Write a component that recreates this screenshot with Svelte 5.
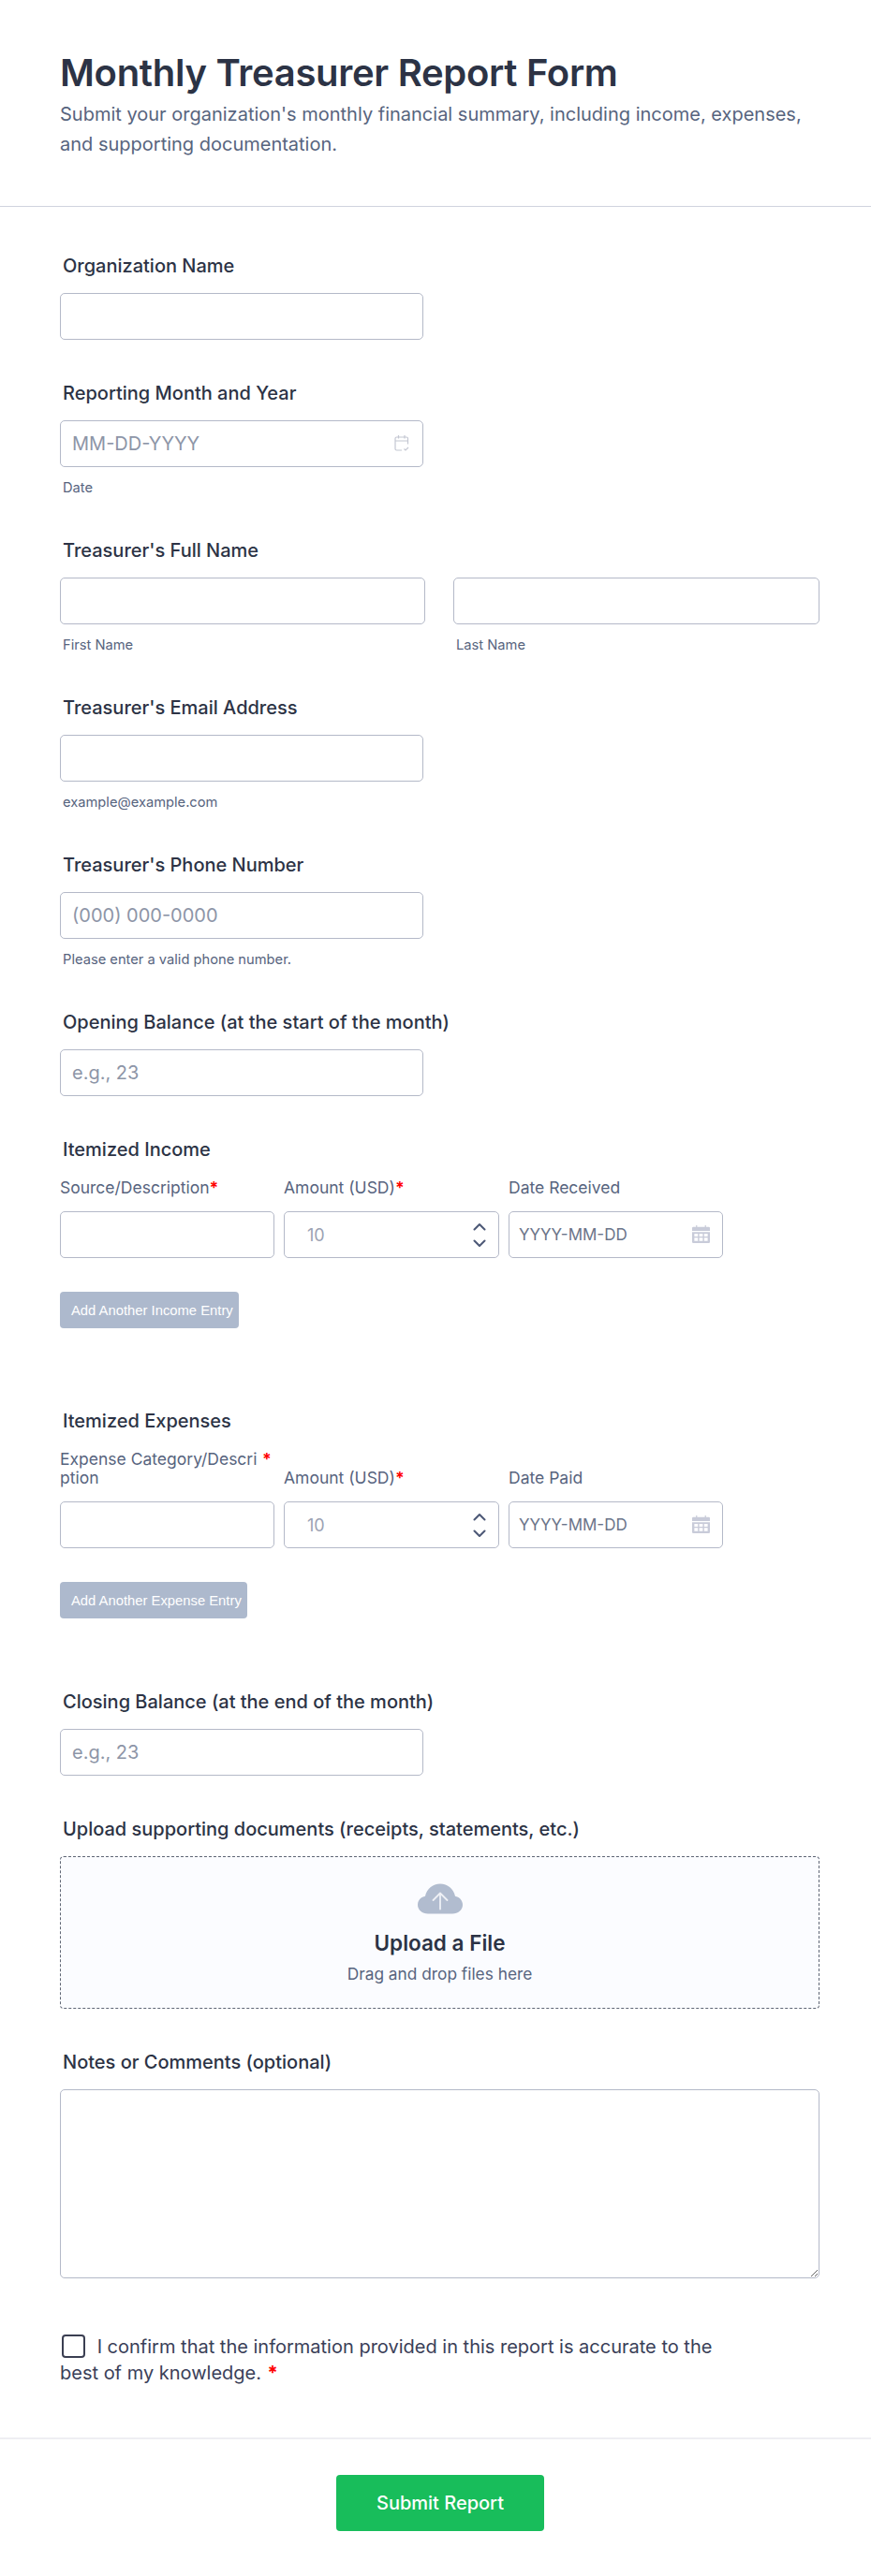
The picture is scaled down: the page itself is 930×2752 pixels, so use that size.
<script>
  const rows = [
    {
      title: "Itemized Income",
      first: "Source/Description",
      date: "Date Received",
      add: "Add Another Income Entry",
      long: false,
    },
    {
      title: "Itemized Expenses",
      first: "Expense Category/Description",
      date: "Date Paid",
      add: "Add Another Expense Entry",
      long: true,
    },
  ];
</script>

{#snippet calendar()}
  <svg class="cal" viewBox="2 2 16 16" width="19" height="19" aria-hidden="true">
    <path d="M2 4.500a1 1 0 0 1 1-1h2.500V2h1v1.500h7V2h1v1.500H17a1 1 0 0 1 1 1V7H2z" fill="#c8cbd9" />
    <path fill-rule="evenodd" d="M2 8h16v9a1 1 0 0 1-1 1H3a1 1 0 0 1-1-1zm2 1.500v2.500h3.200V9.500zm4.400 0v2.500h3.200V9.500zm4.400 0v2.500H16V9.500zM4 13.200v3h3.200v-3zm4.400 0v3h3.200v-3zm4.400 0v3H16v-3z" fill="#c8cbd9" />
  </svg>
{/snippet}

<main class="page">
  <header class="head">
    <h1>Monthly Treasurer Report Form</h1>
    <p>Submit your organization's monthly financial summary, including income, expenses, and supporting documentation.</p>
  </header>

  <form class="form">
    <div class="field">
      <label class="label" for="org">Organization Name</label>
      <input id="org" class="input half" type="text" />
    </div>

    <div class="field">
      <label class="label" for="month">Reporting Month and Year</label>
      <div class="with-icon half">
        <input id="month" class="input" type="text" placeholder="MM-DD-YYYY" />
        <svg class="month-icon" viewBox="1 1 16 18" width="16" height="19" fill="none" stroke="#c4c7d2" stroke-width="1.200" aria-hidden="true">
          <path d="M9 17.500H3.500a1.500 1.500 0 0 1-1.500-1.500V5a1.500 1.500 0 0 1 1.500-1.500h10.500A1.500 1.500 0 0 1 15.500 5v6" />
          <path d="M2 7.500h13.500M5.500 1.500v3.500M12 1.500v3.500" />
          <path d="M11.500 16l1.500 1.500 3-3" />
        </svg>
      </div>
      <small class="sub">Date</small>
    </div>

    <div class="field">
      <span class="label">Treasurer's Full Name</span>
      <div class="name-row">
        <div>
          <input class="input" type="text" aria-label="First Name" />
          <small class="sub">First Name</small>
        </div>
        <div>
          <input class="input" type="text" aria-label="Last Name" />
          <small class="sub">Last Name</small>
        </div>
      </div>
    </div>

    <div class="field">
      <label class="label" for="email">Treasurer's Email Address</label>
      <input id="email" class="input half" type="text" />
      <small class="sub">example@example.com</small>
    </div>

    <div class="field">
      <label class="label" for="phone">Treasurer's Phone Number</label>
      <input id="phone" class="input half" type="text" placeholder="(000) 000-0000" />
      <small class="sub">Please enter a valid phone number.</small>
    </div>

    <div class="field">
      <label class="label" for="opening">Opening Balance (at the start of the month)</label>
      <input id="opening" class="input half" type="text" placeholder="e.g., 23" />
    </div>

    {#each rows as row}
      <section class="table-field">
        <span class="label table-title">{row.title}</span>
        <div class="table-grid">
          <div class="col">
            <span class="col-label first" class:long={row.long}>{row.first}<b>*</b></span>
            <input class="input" type="text" aria-label={row.first} />
          </div>
          <div class="col">
            <span class="col-label">Amount (USD)<b>*</b></span>
            <div class="with-icon">
              <input class="input amount" type="text" placeholder="10" aria-label="Amount (USD)" />
              <svg class="spin" viewBox="0 0 14 27" width="14" height="27" fill="none" stroke="#4c5876" stroke-width="2" stroke-linecap="round" stroke-linejoin="round" aria-hidden="true">
                <path d="M1.500 7.500L7 2l5.500 5.500M1.500 19.500L7 25l5.500-5.500" />
              </svg>
            </div>
          </div>
          <div class="col">
            <span class="col-label">{row.date}</span>
            <div class="with-icon">
              <input class="input date" type="text" placeholder="YYYY-MM-DD" aria-label={row.date} />
              {@render calendar()}
            </div>
          </div>
        </div>
        <button type="button" class="add">{row.add}</button>
      </section>
    {/each}

    <div class="field">
      <label class="label" for="closing">Closing Balance (at the end of the month)</label>
      <input id="closing" class="input half" type="text" placeholder="e.g., 23" />
    </div>

    <div class="field">
      <span class="label">Upload supporting documents (receipts, statements, etc.)</span>
      <div class="upload">
        <svg viewBox="0 0 48 32" width="48" height="33" aria-hidden="true">
          <path d="M11 32C5 32 0 28 0 22.500 0 17.500 3.500 14 8 13.200 9.500 5.500 16 0 24 0s14.500 5.500 16 13.200c4.500.8 8 4.300 8 9.300C48 28 43 32 37 32z" fill="#b1bccf" />
          <path d="M24 27V10M16.500 17.500L24 10l7.500 7.500" fill="none" stroke="#eef0f5" stroke-width="1.800" stroke-linecap="round" stroke-linejoin="round" />
        </svg>
        <strong>Upload a File</strong>
        <span>Drag and drop files here</span>
      </div>
    </div>

    <div class="field">
      <label class="label" for="notes">Notes or Comments (optional)</label>
      <textarea id="notes" class="notes"></textarea>
    </div>

    <div class="confirm">
      <span class="box"></span>
      I confirm that the information provided in this report is accurate to the best of my knowledge.
      <b>*</b>
    </div>
  </form>

  <footer class="foot">
    <button type="button" class="submit">Submit Report</button>
  </footer>
</main>

<style>
  :global(body) {
    background: #fff;
    font-family: Inter, "Liberation Sans", sans-serif;
    color: #2c3345;
  }

  .page {
    width: 930px;
    height: 2752px;
    display: flex;
    flex-direction: column;
  }

  .head {
    height: 221px;
    box-sizing: border-box;
    padding: 54px 64px 0;
    border-bottom: 1px solid #d0d3de;
  }

  h1 {
    margin: 0;
    font-size: 40px;
    line-height: 48px;
    font-weight: 600;
    letter-spacing: -0.3px;
    color: #2c3345;
  }

  .head p {
    margin: 4px 0 0;
    font-size: 20px;
    line-height: 32px;
    color: #57647e;
  }

  .form {
    flex: 1;
    padding: 49px 55px 0 64px;
  }

  .field {
    margin-bottom: 43px;
  }

  .label {
    display: block;
    margin: 0 0 15px 3px;
    font-size: 20px;
    line-height: 28px;
    font-weight: 450;
    color: #2c3345;
  }

  .input {
    display: block;
    width: 100%;
    height: 50px;
    box-sizing: border-box;
    padding: 0 12px;
    border: 1px solid #b4b9c8;
    border-radius: 5px;
    background: #fff;
    font: 20px Inter, sans-serif;
    color: #2c3345;
  }

  .input::placeholder {
    color: #8d95a7;
    opacity: 1;
  }

  .half {
    width: 388px;
  }

  .with-icon {
    position: relative;
  }

  .month-icon {
    position: absolute;
    right: 15px;
    top: 15px;
  }

  .sub {
    display: block;
    margin: 12px 0 0 3px;
    font-size: 14.700px;
    line-height: 20px;
    color: #57647e;
  }

  .name-row {
    display: grid;
    grid-template-columns: 390px 391px;
    gap: 30px;
  }

  .table-title {
    margin-bottom: 17px;
  }

  .table-grid {
    display: grid;
    grid-template-columns: 229px 230px 229px;
    column-gap: 10px;
    align-items: end;
  }

  .col-label {
    display: block;
    margin-bottom: 15px;
    font-size: 17.500px;
    line-height: 20px;
    color: #57647e;
    word-break: break-all;
  }

  .col-label b,
  .confirm b {
    color: #f00;
    font-weight: 700;
  }

  .first {
    position: relative;
    width: 220px;
  }

  .long {
    width: 212px;
  }

  .long b {
    position: absolute;
    left: 216px;
    top: 0;
  }

  .amount {
    padding-left: 24px;
    font-size: 18px;
  }

  .amount::placeholder {
    color: #9ba2b3;
  }

  .date {
    padding-left: 10px;
    font-size: 17px;
  }

  .date::placeholder {
    color: #6b7489;
  }

  .spin {
    position: absolute;
    right: 14px;
    top: 12px;
  }

  .cal {
    position: absolute;
    right: 14px;
    top: 15px;
  }

  .add {
    display: block;
    margin: 36px 0 85px;
    height: 39px;
    padding: 0 6px 0 12px;
    border: 0;
    border-radius: 4px;
    background: #adb9cd;
    color: #fff;
    font: 14.800px "Liberation Sans", Arial, sans-serif;
  }

  .table-field:last-of-type .add {
    margin-bottom: 75px;
  }

  .upload {
    display: flex;
    flex-direction: column;
    align-items: center;
    height: 163px;
    box-sizing: border-box;
    padding-top: 28px;
    border: 1px dashed #5f6675;
    border-radius: 4px;
    background: #fbfcff;
  }

  .upload strong {
    margin-top: 15px;
    font-size: 22.500px;
    line-height: 32px;
    font-weight: 600;
  }

  .upload span {
    margin-top: 5px;
    font-size: 17.300px;
    line-height: 24px;
    color: #57647e;
  }

  .notes {
    display: block;
    width: 100%;
    height: 202px;
    box-sizing: border-box;
    border: 1px solid #b4b9c8;
    border-radius: 5px;
    background: #fff;
  }

  .confirm {
    width: 700px;
    margin-top: 59px;
    font-size: 20px;
    line-height: 28px;
    color: #3a4058;
  }

  .confirm b {
    margin-left: 1px;
  }

  .box {
    display: inline-block;
    width: 25px;
    height: 25px;
    box-sizing: border-box;
    margin: 0 7px 0 2px;
    vertical-align: -5px;
    border: 2px solid #3b3f52;
    border-radius: 4px;
  }

  .foot {
    height: 148px;
    box-sizing: border-box;
    padding: 38px 0 0 10px;
    border-top: 2px solid #eeeef3;
    display: flex;
    justify-content: center;
  }

  .submit {
    width: 222px;
    height: 60px;
    border: 0;
    border-radius: 4px;
    background: #18bd5b;
    color: #fff;
    font: 500 20px Inter, sans-serif;
  }
</style>
